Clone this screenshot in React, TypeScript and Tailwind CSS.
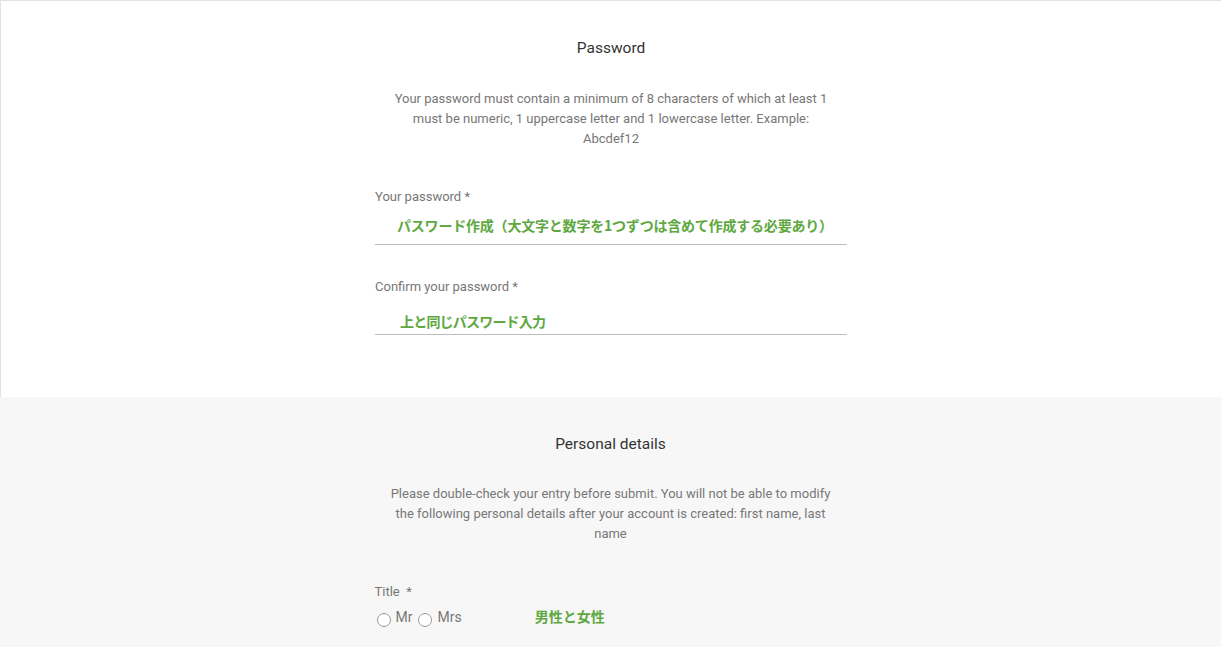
import React from "react";

const green = "text-[#5ea83f]";
const jp = { fontFamily: '"Noto Sans CJK JP", sans-serif' };

function Radio({ label }: { label: string }) {
  return (
    <span className="flex items-center">
      <span className="mt-[6px] inline-block h-[14px] w-[14px] rounded-full border border-[#9a9a9a] bg-white" />
      <span className="ml-[5px] text-[14px] leading-[20px] text-[#777]">{label}</span>
    </span>
  );
}

export default function App() {
  return (
    <div className="min-h-[647px] w-full bg-[#f7f7f7] text-[#777]" style={{ fontFamily: 'Roboto, "Liberation Sans", sans-serif' }}>
      <section className="h-[397px] border-l border-t border-[#e2e2e2] bg-white pt-[35px]">
        <div className="mx-auto w-[472px]">
          <h2 className="text-center text-[15.5px] leading-[24px] text-[#333]">Password</h2>
          <p className="mx-auto mt-[29px] w-[452px] text-center text-[13px] leading-[20px] text-[#777]">
            Your password must contain a minimum of 8 characters of which at least 1 must be numeric, 1 uppercase letter and 1 lowercase letter. Example: Abcdef12
          </p>
          <div className="mt-[38px]">
            <div className="text-[13px] leading-[20px]">Your password *</div>
            <div className="flex h-[38px] items-center border-b border-[#bdbdbd] pl-[22px]">
              <span className={`${green} font-bold text-[14px] tracking-[-0.2px]`} style={jp}>
                パスワード作成（大文字と数字を1つずつは含めて作成する必要あり）
              </span>
            </div>
          </div>
          <div className="mt-[32px]">
            <div className="text-[13px] leading-[20px]">Confirm your password *</div>
            <div className="flex h-[38px] items-center border-b border-[#bdbdbd] pl-[25px] pt-[12px]">
              <span className={`${green} font-bold text-[14px] tracking-[-0.8px]`} style={jp}>
                上と同じパスワード入力
              </span>
            </div>
          </div>
        </div>
      </section>
      <section className="bg-[#f7f7f7] pt-[35px] pb-[20px]">
        <div className="mx-auto w-[472px]">
          <h2 className="text-center text-[15.5px] leading-[24px] text-[#333]">Personal details</h2>
          <p className="mx-auto mt-[28px] w-[452px] text-center text-[13px] leading-[20px] text-[#777]">
            Please double-check your entry before submit. You will not be able to modify the following personal details after your account is created: first name, last name
          </p>
          <div className="mt-[38px]">
            <div className="text-[13px] leading-[20px]">Title&nbsp; *</div>
            <div className="mt-[4px] flex items-center pl-[2px]">
              <Radio label="Mr" />
              <span className="w-[6px]" />
              <Radio label="Mrs" />
              <span className={`${green} ml-[73px] font-bold text-[14px]`} style={jp}>男性と女性</span>
            </div>
          </div>
        </div>
      </section>
    </div>
  );
}
